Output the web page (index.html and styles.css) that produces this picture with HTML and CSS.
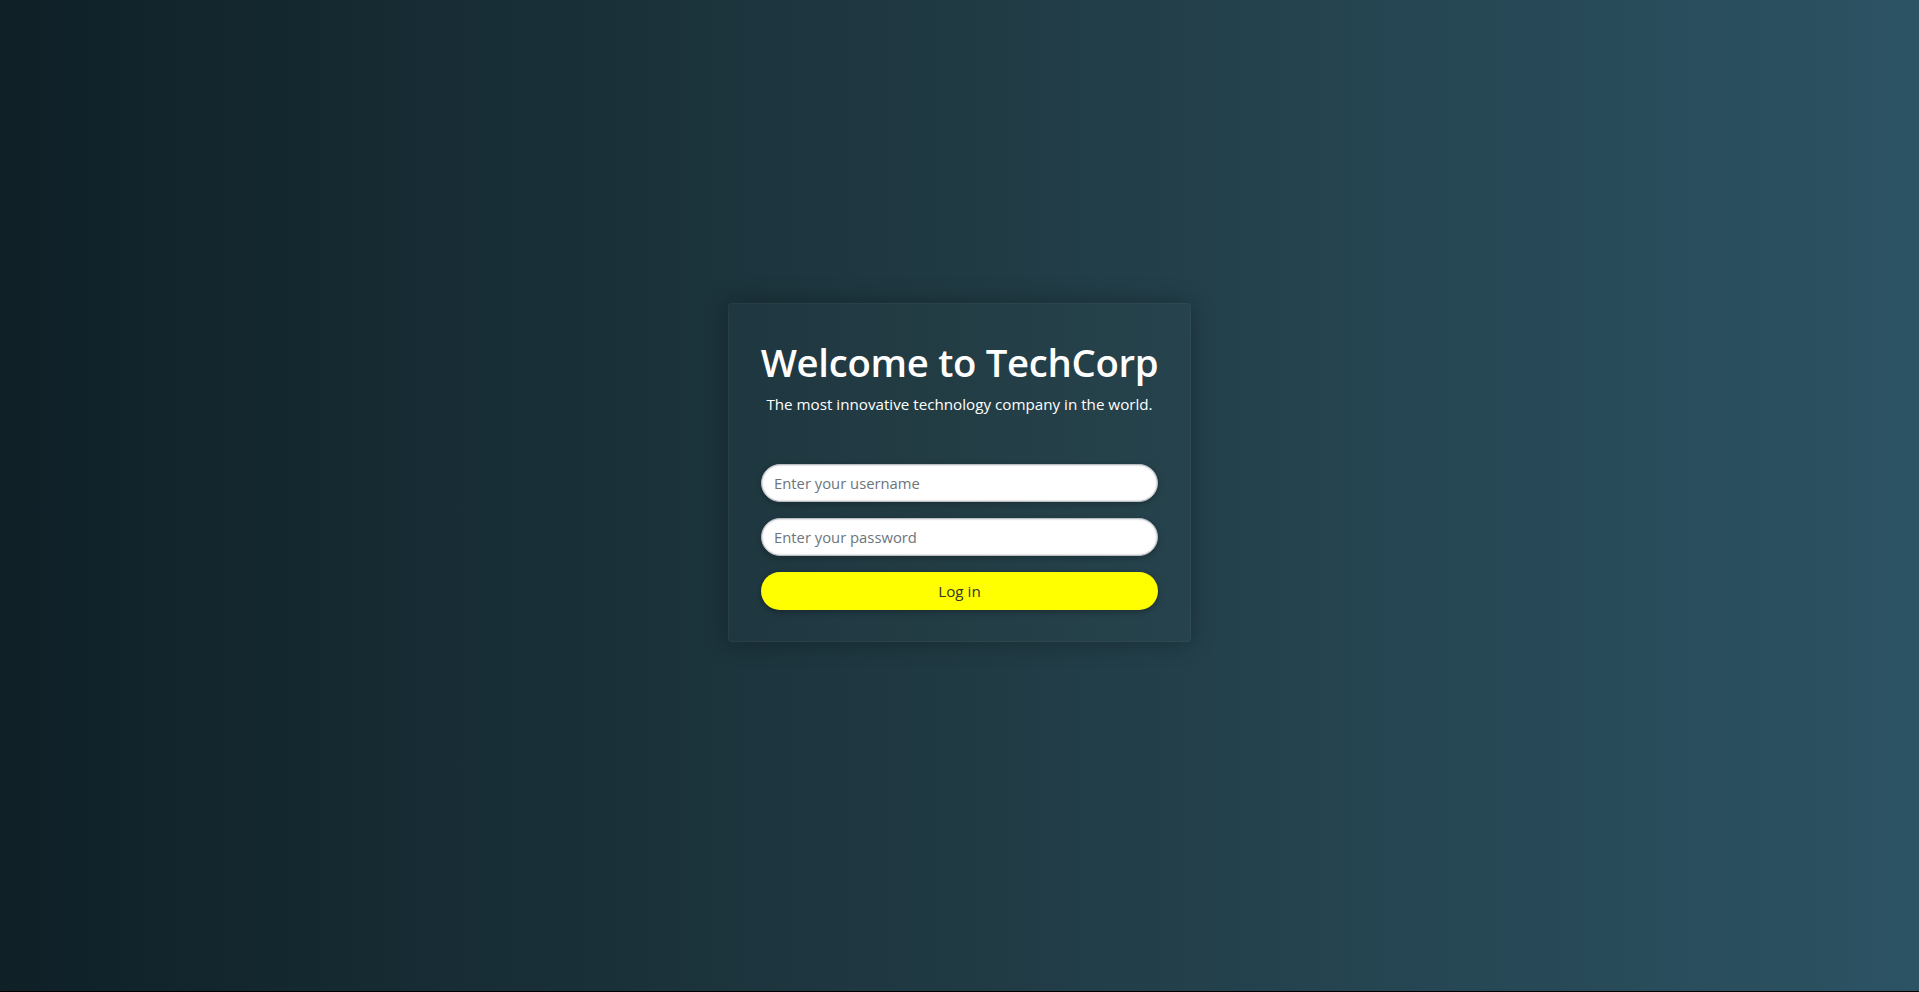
FILE: index.html
```html
<!DOCTYPE html>
<html lang="en">
<head>
<meta charset="utf-8">
<title>TechCorp</title>
<link rel="stylesheet" href="styles.css">
</head>
<body>
<main class="page">
  <section class="card">
    <h1 class="title">Welcome to TechCorp</h1>
    <p class="subtitle">The most innovative technology company in the world.</p>
    <form class="form">
      <input class="field" type="text" placeholder="Enter your username">
      <input class="field" type="password" placeholder="Enter your password">
      <button class="btn" type="button">Log in</button>
    </form>
  </section>
</main>
</body>
</html>
```

FILE: styles.css
```css
html, body {
  margin: 0;
  padding: 0;
  height: 100%;
  background: #000;
}
body {
  font-family: "Open Sans", "Noto Sans", "Liberation Sans", sans-serif;
}
.page {
  height: 991px;
  box-sizing: border-box;
  padding-bottom: 46px;
  background: linear-gradient(to right, #0f2027, #203a43, #2c5364);
  display: flex;
  align-items: center;
  justify-content: center;
}
.card {
  width: 463px;
  box-sizing: border-box;
  padding: 32px 32px 31px;
  background: rgba(255, 255, 255, 0.015);
  border: 1px solid rgba(255, 255, 255, 0.04);
  border-radius: 4px;
  box-shadow: 0 0 24px rgba(0, 0, 0, 0.3);
  display: flex;
  flex-direction: column;
  align-items: center;
}
.title {
  margin: 0;
  color: #fff;
  font-size: 38.3px;
  font-weight: 600;
  line-height: 52px;
  letter-spacing: -0.3px;
  white-space: nowrap;
  text-align: center;
}
.subtitle {
  margin: 6px 0 0;
  color: #fff;
  font-size: 15.2px;
  line-height: 20px;
  white-space: nowrap;
}
.form {
  width: 100%;
  margin-top: 50px;
  display: flex;
  flex-direction: column;
  gap: 16px;
}
.field {
  height: 38px;
  box-sizing: border-box;
  padding: 0 12px;
  border: 1px solid #b9bec4;
  border-radius: 19px;
  background: #fff;
  font-family: inherit;
  font-size: 14.8px;
  color: #333;
  box-shadow: inset 0 0 2px rgba(0, 0, 0, 0.35), 0 2px 6px rgba(0, 0, 0, 0.25);
  outline: none;
}
.field::placeholder {
  color: #6c757d;
}
.btn {
  height: 38px;
  border: none;
  border-radius: 19px;
  background: #ffff00;
  color: #333;
  font-family: inherit;
  font-size: 15.2px;
  box-shadow: 0 2px 6px rgba(0, 0, 0, 0.3);
  cursor: pointer;
}
```
